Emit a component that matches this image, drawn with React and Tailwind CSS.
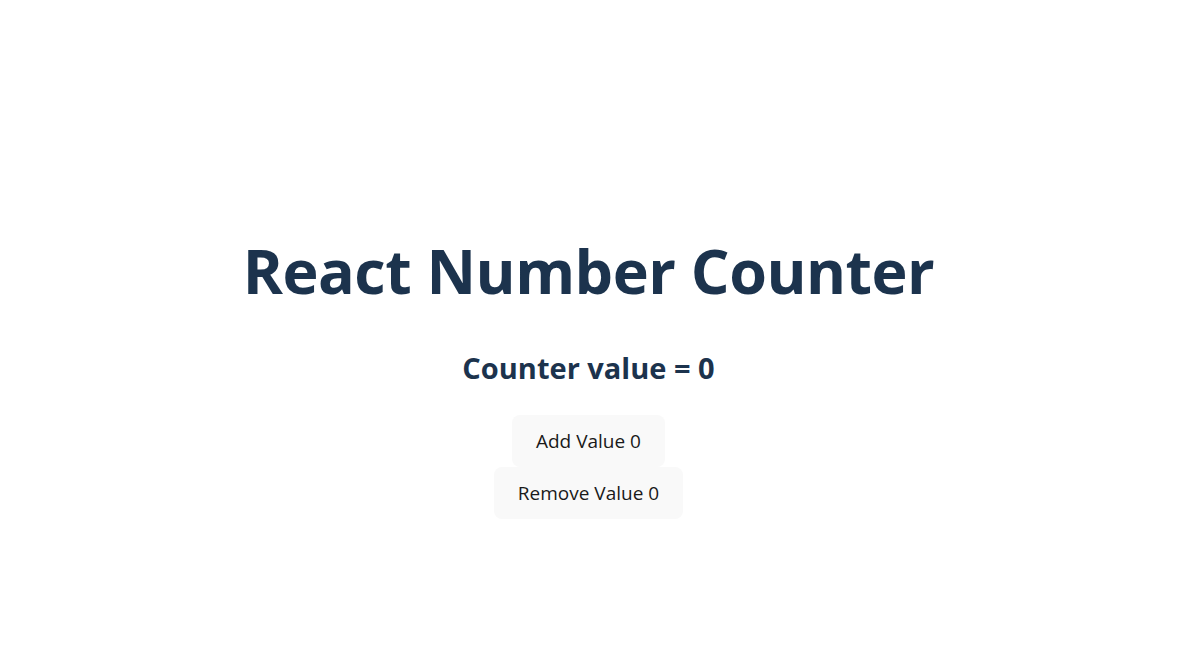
export default function App() {
  return (
    <div className="min-h-screen w-full bg-white flex flex-col items-center pt-[236px] pr-[13px]" style={{ fontFamily: '"Open Sans", "Noto Sans", sans-serif' }}>
      <h1 className="text-[61px] leading-[70px] font-bold text-[#1c334d] tracking-[-0.5px]">React Number Counter</h1>
      <h2 className="mt-[44px] text-[29px] leading-[36px] font-bold text-[#1c334d]">Counter value = 0</h2>
      <div className="mt-[29px] flex flex-col items-center">
        <button className="h-[52px] px-[24px] rounded-[8px] bg-[#f9f9f9] text-[19px] text-[#1a1a1a]">Add Value 0</button>
        <button className="h-[52px] px-[24px] rounded-[8px] bg-[#f9f9f9] text-[19px] text-[#1a1a1a]">Remove Value 0</button>
      </div>
    </div>
  );
}
